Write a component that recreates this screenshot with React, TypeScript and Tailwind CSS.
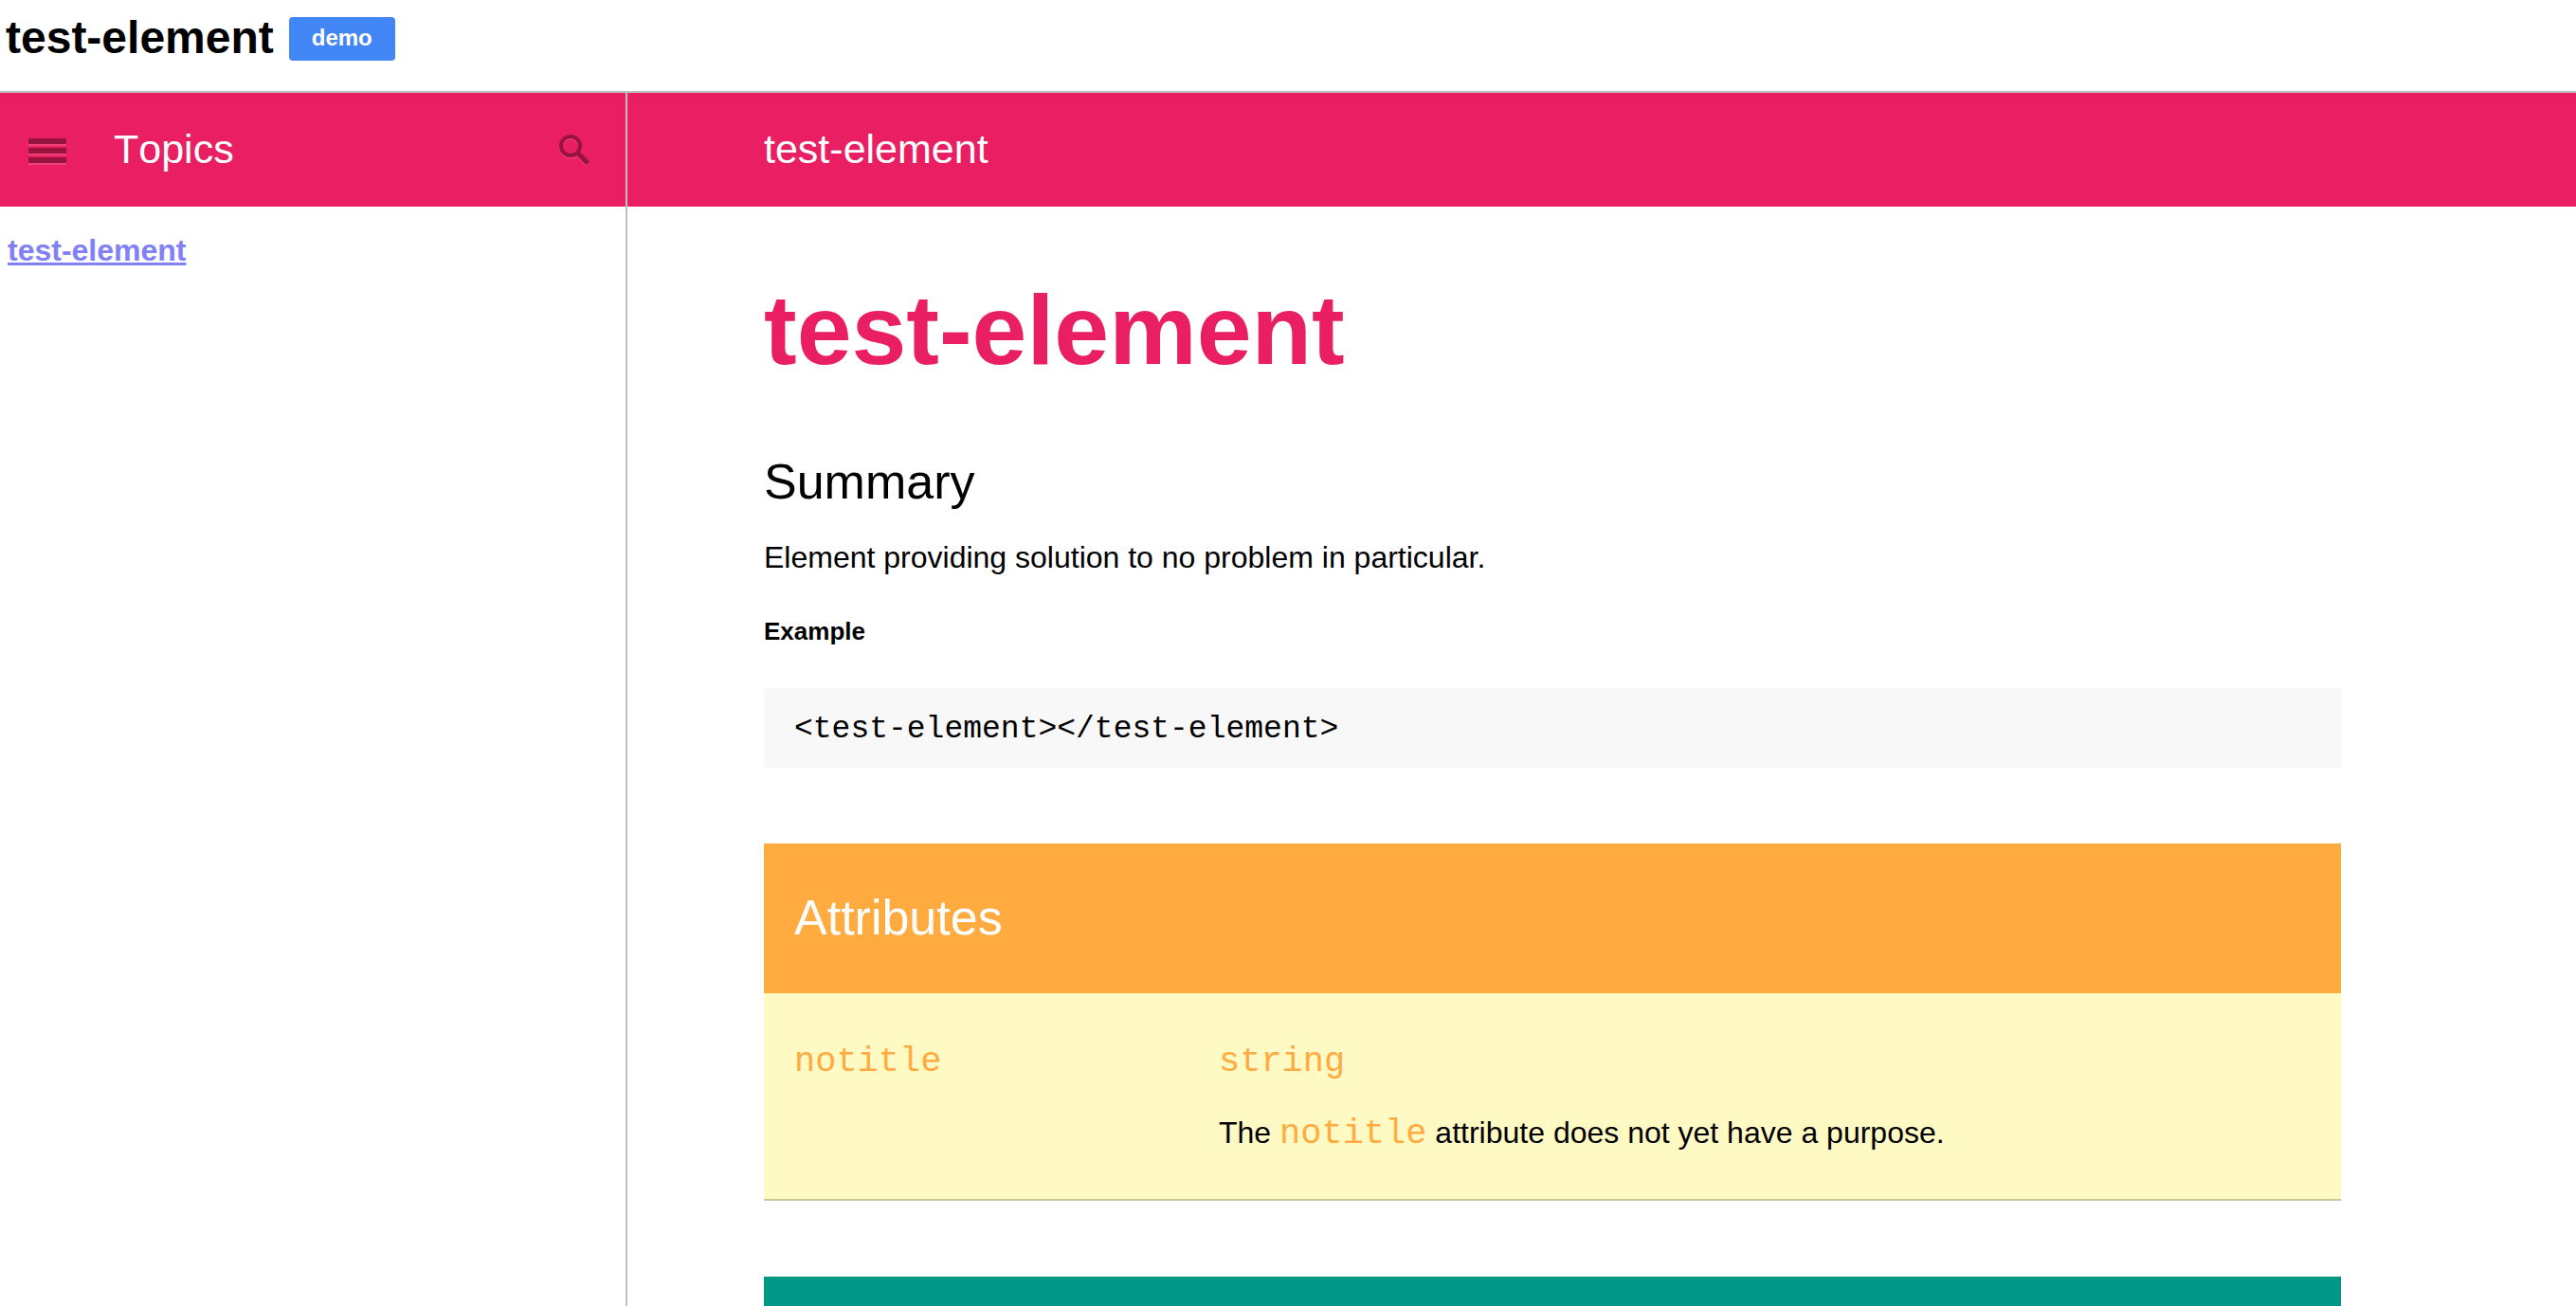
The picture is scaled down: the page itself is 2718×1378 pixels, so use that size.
const SANS = 'font-["Liberation_Sans",Arial,sans-serif]';
const MONO = 'font-["Liberation_Mono","Courier_New",monospace]';

function MenuIcon() {
  return (
    <svg viewBox="0 -4 40 32" className="h-8 w-10" aria-hidden="true">
      {[0, 10, 20].map((y) => (
        <g key={y}>
          <rect y={y} width="40" height="6" fill="#98143f" />
          <rect y={y + 6} width="40" height="2" fill="#ee4379" />
        </g>
      ))}
    </svg>
  );
}

function SearchIcon() {
  return (
    <svg viewBox="0 0 34 34" className="h-[34px] w-[34px]" fill="none" aria-hidden="true">
      <g stroke="#ee4379" strokeOpacity="0.6" transform="translate(0 2)">
        <circle cx="12" cy="13" r="10" strokeWidth="4" />
        <path d="M19.5 20.5 30.5 31.5" strokeWidth="5" />
      </g>
      <g stroke="#98143f">
        <circle cx="12" cy="13" r="10" strokeWidth="4" />
        <path d="M19 20 30.5 31.5" strokeWidth="5" />
      </g>
    </svg>
  );
}

export default function App() {
  return (
    <div className={`flex h-screen flex-col overflow-hidden bg-white text-black ${SANS}`}>
      <header className="flex h-[98px] shrink-0 items-start gap-4 border-b-2 border-[#c0c0c0] pt-3 pl-1.5">
        <h1 className="text-[48px] leading-[56px] font-bold">test-element</h1>
        <button
          type="button"
          className="mt-1.5 h-[46px] rounded-sm bg-[#4285f4] px-6 pb-0.5 text-[24px] leading-[40px] font-bold text-white"
        >
          demo
        </button>
      </header>

      <div className="flex min-h-0 flex-1">
        <aside className="flex w-[662px] shrink-0 flex-col border-r-2 border-[#c0c0c0]">
          <div className="flex h-[120px] items-center bg-[#e91e63] pr-9 pl-[30px] text-white">
            <button type="button" aria-label="Menu">
              <MenuIcon />
            </button>
            <h2 className="ml-[50px] flex-1 pb-0.5 text-[43px] leading-[52px] [font-kerning:none]">Topics</h2>
            <button type="button" aria-label="Search">
              <SearchIcon />
            </button>
          </div>
          <nav className="px-2 py-[26px]">
            <a href="#test-element" className="text-[32px] leading-[40px] font-bold text-[#8080f7] underline">
              test-element
            </a>
          </nav>
        </aside>

        <main className="flex min-w-0 flex-1 flex-col overflow-hidden">
          <div className="flex h-[120px] shrink-0 items-center bg-[#e91e63] px-36 text-white">
            <h2 className="pb-0.5 text-[43px] leading-[52px]">test-element</h2>
          </div>

          <article className="mr-[248px] ml-36 max-w-[1664px] pt-[68px]">
            <h1 className="text-[104px] leading-[124px] font-bold text-[#e91e63]">test-element</h1>

            <h2 className="mt-16 text-[52px] leading-[68px]">Summary</h2>
            <p className="mt-[26px] text-[32px] leading-[40px]">
              Element providing solution to no problem in particular.
            </p>
            <h4 className="mt-10 text-[26px] leading-[36px] font-bold">Example</h4>
            <pre className={`mt-[42px] bg-[#f8f8f8] px-8 pt-6 pb-5 text-[33px] leading-[40px] ${MONO}`}>
              <code>{"<test-element></test-element>"}</code>
            </pre>

            <section className="mt-20">
              <h3 className="bg-[#ffab40] px-8 pt-12 pb-[50px] text-[52px] leading-[60px] text-white">Attributes</h3>
              <dl className="grid grid-cols-[28fr_72fr] border-b-2 border-[#ccc79d] bg-[#fff9c4] px-8 pt-[52px] pb-12">
                <dt className={`text-[37px] leading-[40px] text-[#ffab40] ${MONO}`}>notitle</dt>
                <dd>
                  <div className={`text-[37px] leading-[40px] text-[#ffab40] ${MONO}`}>string</div>
                  <p className="mt-[34px] text-[32px] leading-[42px]">
                    The <code className={`text-[37px] text-[#ffab40] ${MONO}`}>notitle</code> attribute does not yet
                    have a purpose.
                  </p>
                </dd>
              </dl>
            </section>

            <section className="mt-20 h-40 bg-[#009688]" />
          </article>
        </main>
      </div>
    </div>
  );
}
